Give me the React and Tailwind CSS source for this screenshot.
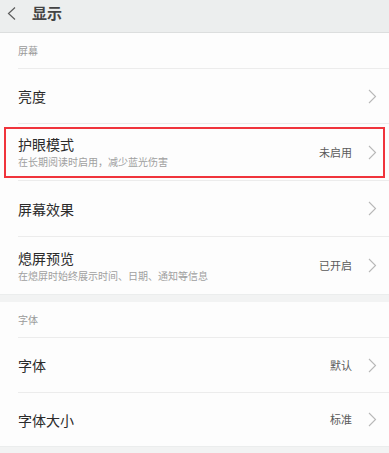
const font = { fontFamily: '"Noto Sans CJK SC", "Noto Sans", sans-serif' };

const Chevron = () => (
    <svg width="9" height="15" viewBox="0 0 9 15" fill="none" className="shrink-0">
        <polyline points="1,1 7.5,7.5 1,14" stroke="#b8b8b8" strokeWidth="1.1" />
    </svg>
);

const Row = ({ title, desc, value, h, highlight, last }) => (
    <div className={`relative flex items-center pl-[18px] ${h}`}>
        <div className={`flex flex-1 items-center h-full pr-[12px] ${last ? "" : "border-b border-[#ececec]"}`}>
            <div className="flex-1">
                <div className="text-[14px] leading-[18px] text-[#2b2b2b]">{title}</div>
                {desc && <div className="text-[10px] leading-[14px] mt-[2px] text-[#a0a0a0]">{desc}</div>}
            </div>
            {value && <span className="text-[11px] text-[#5a5a5a] mr-[16px]">{value}</span>}
            <Chevron />
        </div>
        {highlight && (
            <span className="absolute left-[4px] right-[4px] top-[3px] bottom-[3px] border-2 border-[#f0343c] pointer-events-none"></span>
        )}
    </div>
);

const Label = ({ text }) => (
    <div className="pl-[18px]">
        <div className="h-[36px] flex items-center border-b border-[#ececec] text-[10px] text-[#9a9a9a]">{text}</div>
    </div>
);

export default function App() {
    return (
        <div className="w-[389px] h-[453px] overflow-hidden bg-[#f2f3f3]" style={font}>
            {/* header */}
            <div className="h-[33px] flex items-start pt-[4px] bg-[#eceeee] border-b border-[#dcdede]">
                <span className="w-[32px] h-[18px] shrink-0 flex items-center pl-[7px]">
                    <svg width="9" height="13" viewBox="0 0 9 13" fill="none">
                        <polyline points="8,0.5 1.5,6.5 8,12.5" stroke="#5c5c5c" strokeWidth="1.2" />
                    </svg>
                </span>
                <span className="text-[15px] leading-[18px] font-semibold text-[#444]">显示</span>
            </div>
            {/* screen */}
            <div className="bg-[#fdfdfd] border-b border-[#ebeded]">
                <Label text="屏幕" />
                <Row title="亮度" h="h-[55px]" />
                <Row title="护眼模式" desc="在长期阅读时启用，减少蓝光伤害" value="未启用" h="h-[57px]" highlight />
                <Row title="屏幕效果" h="h-[56px]" />
                <Row title="熄屏预览" desc="在熄屏时始终展示时间、日期、通知等信息" value="已开启" h="h-[57px]" last />
            </div>
            {/* font */}
            <div className="mt-[7px] bg-[#fdfdfd] border-b border-[#ebeded]">
                <Label text="字体" />
                <Row title="字体" value="默认" h="h-[55px]" />
                <Row title="字体大小" value="标准" h="h-[53px]" last />
            </div>
        </div>
    );
}
